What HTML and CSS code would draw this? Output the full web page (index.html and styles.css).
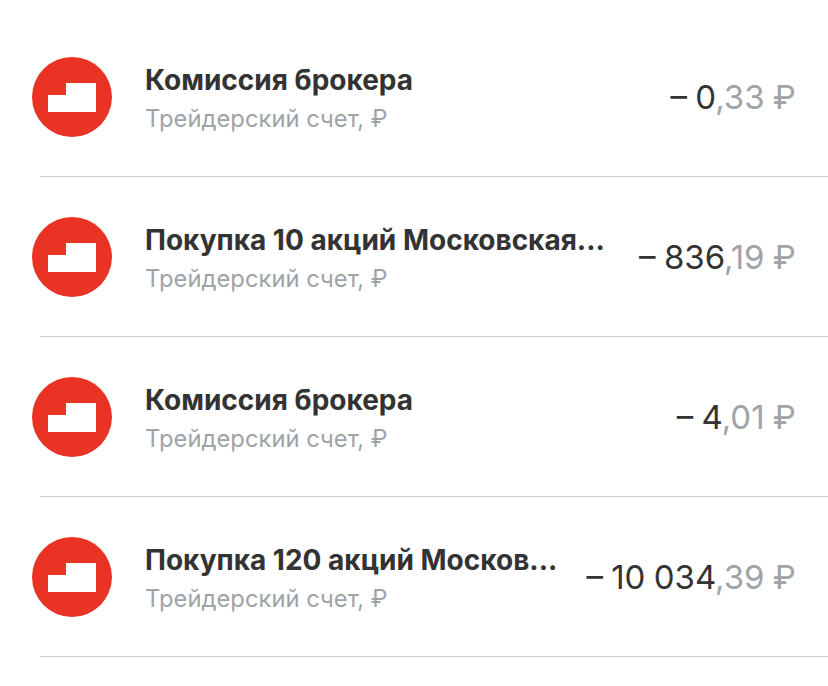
FILE: index.html
```html
<!DOCTYPE html>
<html lang="ru">
<head>
    <meta charset="UTF-8">
    <title>Операции</title>
    <link rel="stylesheet" href="styles.css">
</head>
<body>
    <ul class="list">
        <li class="row">
            <svg class="logo" viewBox="0 0 80 80"><circle cx="40" cy="40" r="40" fill="#e93325"/><path d="M16 55V38H34V26H64V55Z" fill="#fff"/></svg>
            <div class="info">
                <div class="title">Комиссия брокера</div>
                <div class="sub">Трейдерский счет, ₽</div>
            </div>
            <div class="sum">– 0<span class="cents">,33 ₽</span></div>
        </li>
        <li class="row">
            <svg class="logo" viewBox="0 0 80 80"><circle cx="40" cy="40" r="40" fill="#e93325"/><path d="M16 55V38H34V26H64V55Z" fill="#fff"/></svg>
            <div class="info">
                <div class="title">Покупка 10 акций Московская...</div>
                <div class="sub">Трейдерский счет, ₽</div>
            </div>
            <div class="sum">– 836<span class="cents">,19 ₽</span></div>
        </li>
        <li class="row">
            <svg class="logo" viewBox="0 0 80 80"><circle cx="40" cy="40" r="40" fill="#e93325"/><path d="M16 55V38H34V26H64V55Z" fill="#fff"/></svg>
            <div class="info">
                <div class="title">Комиссия брокера</div>
                <div class="sub">Трейдерский счет, ₽</div>
            </div>
            <div class="sum">– 4<span class="cents">,01 ₽</span></div>
        </li>
        <li class="row">
            <svg class="logo" viewBox="0 0 80 80"><circle cx="40" cy="40" r="40" fill="#e93325"/><path d="M16 55V38H34V26H64V55Z" fill="#fff"/></svg>
            <div class="info">
                <div class="title">Покупка 120 акций Москов...</div>
                <div class="sub">Трейдерский счет, ₽</div>
            </div>
            <div class="sum">– 10 034<span class="cents">,39 ₽</span></div>
        </li>
    </ul>
</body>
</html>
```

FILE: styles.css
```css
body {
    margin: 0;
    background-color: #ffffff;
    font-family: "Inter", "Roboto", sans-serif;
}
.list {
    list-style: none;
    margin: 0;
    padding: 17px 0 0 0;
}
.row {
    display: flex;
    align-items: center;
    height: 159px;
    padding-right: 32px;
    border-bottom: 1px solid #cccccd;
    margin-left: 40px;
}
.logo {
    width: 80px;
    height: 80px;
    flex: none;
    margin-left: -8px;
}
.info {
    margin-left: 33px;
    padding-top: 4px;
    flex: 1;
    min-width: 0;
    white-space: nowrap;
}
.title {
    font-size: 28px;
    font-weight: 700;
    color: #333333;
    line-height: 34px;
}
.sub {
    font-size: 23.8px;
    color: #a0a3a8;
    line-height: 30px;
    margin-top: 7px;
}
.sum {
    font-size: 33px;
    color: #333333;
    white-space: nowrap;
    word-spacing: -1px;
}
.cents {
    color: #a0a3a8;
}
```
